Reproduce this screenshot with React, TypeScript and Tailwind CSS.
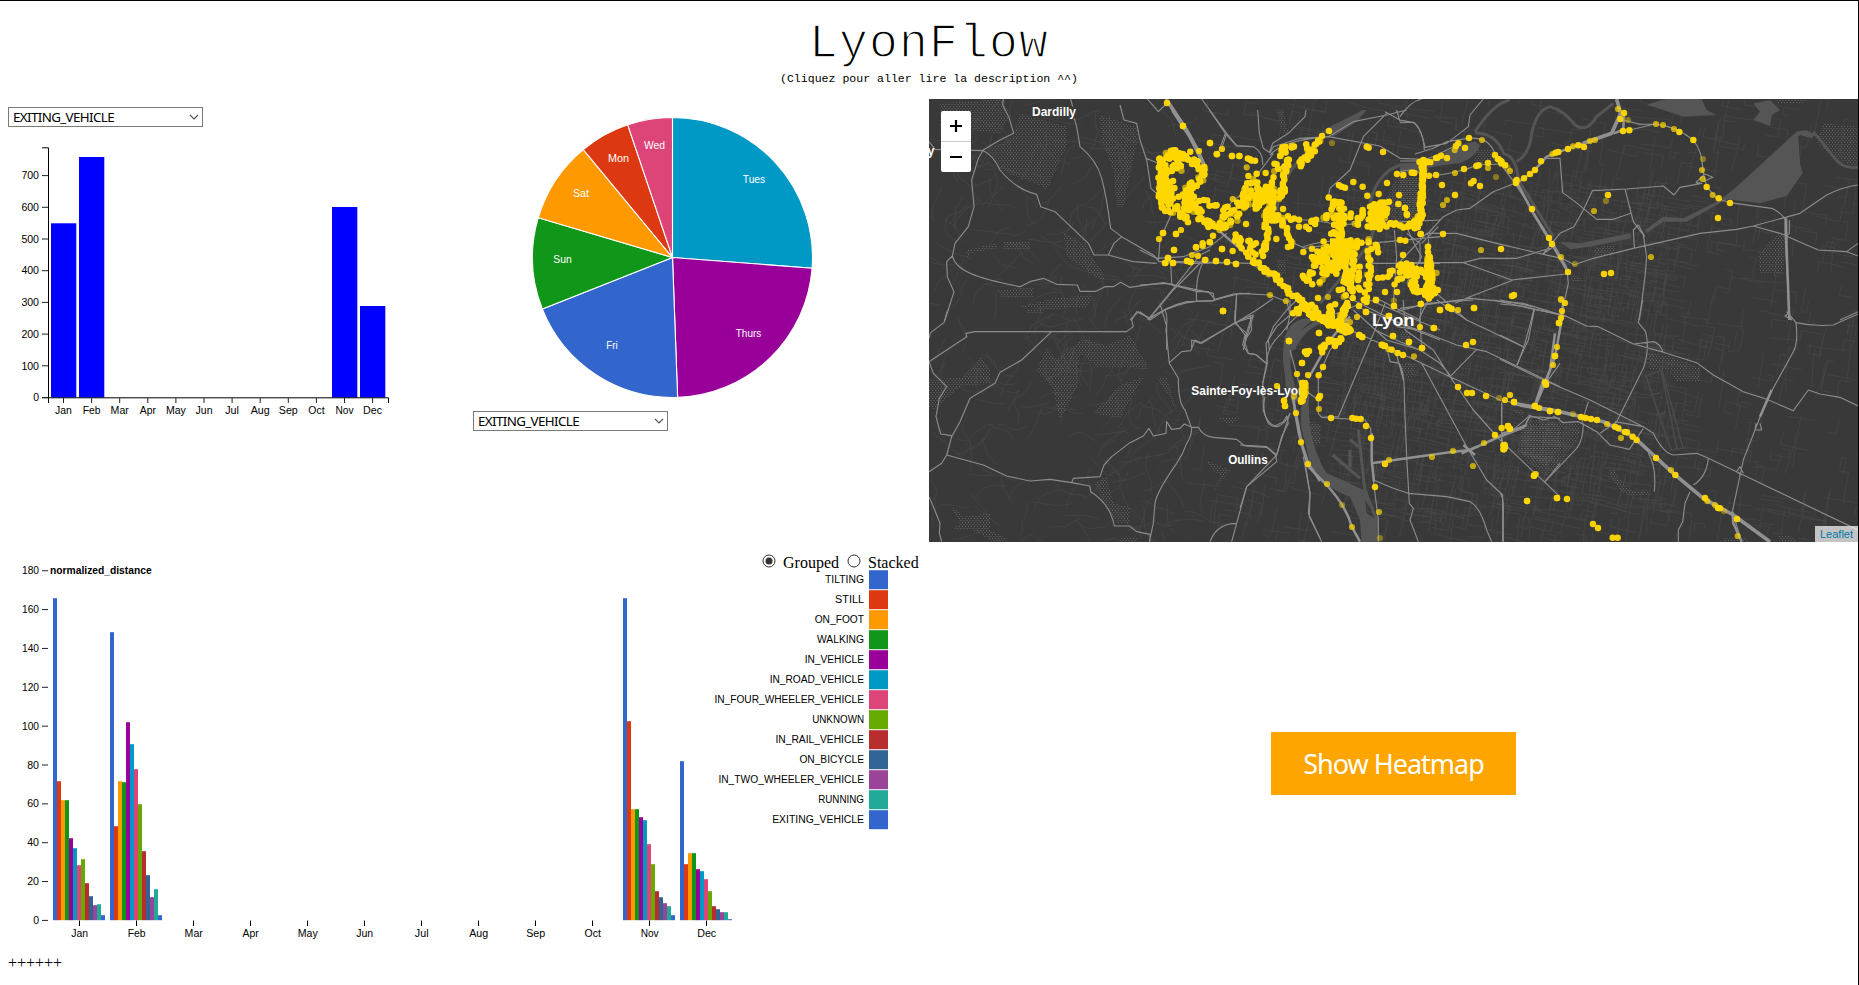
import React from "react";

const COLORS = ["#3366cc", "#dc3912", "#ff9900", "#109618", "#990099", "#0099c6", "#dd4477", "#66aa00", "#b82e2e", "#316395", "#994499", "#22aa99", "#3366cc"];
const ACTIVITIES = [
  { name: "TILTING", w: 39 }, { name: "STILL", w: 29 }, { name: "ON_FOOT", w: 49.3 }, { name: "WALKING", w: 47 },
  { name: "IN_VEHICLE", w: 59.3 }, { name: "IN_ROAD_VEHICLE", w: 94.3 }, { name: "IN_FOUR_WHEELER_VEHICLE", w: 149.6 },
  { name: "UNKNOWN", w: 51.8 }, { name: "IN_RAIL_VEHICLE", w: 88.6 }, { name: "ON_BICYCLE", w: 64.6 },
  { name: "IN_TWO_WHEELER_VEHICLE", w: 145.6 }, { name: "RUNNING", w: 45.8 }, { name: "EXITING_VEHICLE", w: 91.8 },
];
const MONTHS = ["Jan", "Feb", "Mar", "Apr", "May", "Jun", "Jul", "Aug", "Sep", "Oct", "Nov", "Dec"];
const MONTH_W = [16.8, 17.8, 18.2, 16.2, 20, 17, 13.7, 19, 19, 16.3, 18, 19];

function Select({ className = "" }: { className?: string }) {
  return (
    <div className={"flex h-5 w-[195px] items-center justify-between border border-[#7a7a7a] bg-white pl-1 pr-[3px] " + className}>
      <span className="font-['Noto_Sans',sans-serif] text-[13.33px] leading-[18px] tracking-[-0.6px] text-black">EXITING_VEHICLE</span>
      <svg width="10" height="6" viewBox="0 0 10 6" fill="none" stroke="#555" strokeWidth="1.2"><path d="M1 1 L5 5 L9 1" /></svg>
    </div>
  );
}

function Label({ x, y, w, children, anchor = "middle", fill = "#000", className }: { x: number; y: number; w: number; children: React.ReactNode; anchor?: "start" | "middle" | "end"; fill?: string; className?: string }) {
  return (
    <text x={x} y={y} textAnchor={anchor} textLength={w} lengthAdjust="spacingAndGlyphs" fill={fill} className={className}>
      {children}
    </text>
  );
}

function MonthlyBars() {
  const bars = [[51, 223.3], [79, 157], [332, 207], [360, 306]];
  return (
    <svg className="block font-['Liberation_Sans',Arial,sans-serif] text-[10px]" width="400" height="300" viewBox="0 127 400 300">
      {bars.map(([x, y]) => <rect key={x} x={x} y={y} width="25.3" height={397.5 - y} fill="#00f" />)}
      <path d="M42 147.8H48.5V397.8H42 M48.5 397V403 M48.5 397.8H388.5V403" fill="none" stroke="#000" />
      {[0, 1, 2, 3, 4, 5, 6, 7].map((v) => (
        <g key={v}>
          <path d={`M42 ${397.5 - v * 31.7}H48`} stroke="#222" />
          <Label x={39} y={401.2 - v * 31.7} anchor="end" w={v ? 17.6 : 5.8}>{v * 100}</Label>
        </g>
      ))}
      {MONTHS.map((m, i) => (
        <g key={m}>
          <path d={`M${63.5 + i * 28.1} 398V403`} stroke="#222" />
          <Label x={63.5 + i * 28.1} y={414.2} w={MONTH_W[i]}>{m}</Label>
        </g>
      ))}
    </svg>
  );
}

function Pie() {
  const cuts = [0, 94.4, 177.9, 248.4, 286.5, 320.4, 341.35, 360];
  const fills = ["#0099c6", "#990099", "#3366cc", "#109618", "#ff9900", "#dc3912", "#dd4477"];
  const labels: [string, number, number, number][] = [["Tues", 754, 183.3, 22.5], ["Thurs", 748.5, 337.3, 25.5], ["Fri", 612, 349.3, 11.5], ["Sun", 562.5, 263.3, 18.5], ["Sat", 581, 197.3, 16], ["Mon", 618.5, 162.3, 21], ["Wed", 654.5, 149.3, 21]];
  const at = (deg: number) => {
    const a = (deg * Math.PI) / 180;
    return `${672.5 + 140 * Math.sin(a)} ${257.5 - 140 * Math.cos(a)}`;
  };
  return (
    <svg className="block font-['Liberation_Sans',Arial,sans-serif] text-[10px]" width="400" height="304" viewBox="473 107 400 304">
      {fills.map((f, i) => <path key={i} d={`M672.5 257.5L${at(cuts[i])}A140 140 0 0 1 ${at(cuts[i + 1])}Z`} fill={f} stroke="#fff" strokeWidth="1.1" />)}
      {labels.map(([s, x, y, w]) => <Label key={s} x={x} y={y} w={w} fill="#fff">{s}</Label>)}
    </svg>
  );
}

const GROUPS: { x: number; h: number[] }[] = [
  { x: 53, h: [966, 417, 360, 360, 246, 216, 165, 183, 111, 72, 45, 48, 15] },
  { x: 110, h: [864, 282, 417, 414, 594, 528, 453, 348, 207, 135, 69, 93, 15] },
  { x: 623, h: [966, 597, 333, 333, 309, 300, 228, 168, 87, 69, 51, 42, 15] },
  { x: 680, h: [477, 168, 201, 201, 153, 147, 123, 87, 42, 33, 24, 24, 3] },
];

function GroupedBars() {
  return (
    <svg className="block font-['Liberation_Sans',Arial,sans-serif] text-[10px]" width="929" height="380" viewBox="0 570 929 380" overflow="visible">
      {[0, 1, 2, 3, 4, 5, 6, 7, 8, 9].map((i) => (
        <g key={i}>
          <path d={`M42 ${920.4 - i * 38.85}H48`} stroke="#222" />
          <Label x={39} y={924 - i * 38.85} anchor="end" w={i === 0 ? 5.8 : i < 5 ? 11.8 : 17}>{i * 20}</Label>
        </g>
      ))}
      <Label x={50} y={574.3} w={101.7} anchor="start" className="font-bold">normalized_distance</Label>
      {GROUPS.map((g) => g.h.map((h, i) => <rect key={g.x + "-" + i} x={g.x + i * 4} y={920.2 - h / 3} width="4" height={h / 3} fill={COLORS[i]} />))}
      {MONTHS.map((m, i) => (
        <g key={m}>
          <path d={`M${79.5 + i * 57} 920.5V926`} stroke="#000" />
          <Label x={79.7 + i * 57} y={936.5} w={MONTH_W[i]}>{m}</Label>
        </g>
      ))}
      {ACTIVITIES.map((a, i) => (
        <g key={a.name}>
          <rect x="869" y={570.2 + i * 20} width="19" height="19" fill={COLORS[i]} />
          <Label x={864} y={583.2 + i * 20} anchor="end" w={a.w}>{a.name}</Label>
        </g>
      ))}
    </svg>
  );
}

type Track = { p: number[]; s: number; d: number };
type Sheet = { x: number; y: number; roads: string; wide?: string; highway?: string; water?: string; thinWater?: string; woods?: string; blobs?: string; dots: number[]; dim?: number[]; tracks?: Track[] };
const t = (s: number, d: number, ...p: number[]): Track => ({ p, s, d });

// Every sheet is drawn at three units per pixel from its own origin.
const SHEETS: Sheet[] = [
  {
    x: 920, y: 90,
    roads: "M250 27L248 45L268 85L281 130L240 150L190 180L175 205L155 270L162 350L145 410L105 460L97 498L80 515L82 560L102 605L75 690 M97 498Q105 530 150 550T300 590L330 575L370 565L410 583L472 585L480 604L528 604L555 590L580 590L602 577L628 592L730 578L765 587L830 604L865 605L885 628L940 612L990 610 M27 155L45 178L190 182Q220 195 240 240Q290 300 350 313L362 350L405 365L505 460L522 495L565 495Q600 505 640 515L710 520 M565 495L582 460L605 440L572 415Q560 320 545 265T480 170L470 110L463 85 M452 27L458 50 M605 440L700 495L718 515 M600 45L612 90L650 100L660 150L680 210L693 295L715 315 M678 205L715 220 M682 27L715 65L735 45 M845 27L920 130L950 167L990 170 M920 130L905 175 M752 520L755 580L765 590 M683 690L765 590L840 495L870 480 M735 660Q800 630 880 632L940 612 M830 635Q825 560 850 515 M945 690L950 612 M630 690L655 665L690 685 M715 515L720 450L755 370 M718 515L820 520L940 518",
    highway: "M738 27L800 120L835 185L860 245",
    woods: "M60 40L250 27L270 80L240 130L150 120L60 110Z M300 70L440 110L440 170L380 300L350 280L260 250L200 180L280 140Z M540 75L650 110L650 160L610 350L590 350L580 240L545 150Z M140 480L230 460L230 475L150 490L140 510Z M250 455L330 455L330 478L250 478Z M430 430L500 470L560 570L540 570L440 500Z M230 600L340 590L340 625L240 620Z M300 650L400 625L520 615L500 650L380 660Z",
    dots: [741, 39, 789, 108, 870, 159, 891, 193, 936, 198, 958, 198, 729, 429, 768, 432, 762, 480, 744, 504, 736, 519, 759, 519, 802, 513, 812, 516, 855, 510, 888, 513, 921, 516, 948, 522, 909, 663, 828, 472, 848, 460, 870, 456, 906, 477],
    dim: [837, 183, 906, 177, 760, 180, 939, 327, 717, 447, 783, 420, 816, 495, 834, 497],
  },
  {
    x: 1140, y: 110,
    roads: "M208 0L256 70L290 108L340 110Q370 125 368 165 M256 70L230 140 M353 0L358 70L370 115L390 128L400 110L480 85L565 80L720 108L780 145L900 150 M388 128L398 100L445 70L495 20L498 0 M390 135Q430 90 565 80L640 35L740 15L800 0 M740 10L670 80L630 180L570 235L565 260 M735 5L780 30L820 38Q850 60 853 120 M780 35L770 0 M490 410Q580 380 690 400L900 380 M430 330L520 330L600 345L660 340 M440 390L495 415L560 405 M690 340L900 330 M763 360L770 440L760 580 M800 350Q820 400 845 440L800 520 M845 400L895 350 M690 460L900 460 M865 375L870 560L840 620L845 720 M240 330Q250 290 310 250L400 130 M0 420L50 445L130 440L210 410L260 370 M55 455L140 455L330 460L400 500L470 570L440 600L400 650L385 690L388 720 M25 630L100 540L190 450 M0 525L80 520L220 550L222 570L300 550L390 555L440 575 M30 625Q80 590 140 575L220 573 M290 550L285 640L320 670L310 720 M285 640L350 600L400 565 M285 640L180 700L155 690L155 720 M60 580L80 650V720 M330 615L335 660L315 690 M565 620L690 570L900 660 M620 560L800 650L900 690 M640 600L740 690L840 720 M700 560L840 630 M440 570L450 615L440 660 M0 605L25 625",
    highway: "M98 0L150 80L190 160",
    wide: "M240 365L340 450L400 500",
    thinWater: "M410 320Q410 230 470 160L560 60L660 10 M690 280Q710 190 780 165L900 160 M540 580L690 400L720 280",
    water: "M440 720Q450 670 550 620L545 640Q490 660 465 720Z M560 60L640 20L665 0L680 0L650 35L580 80Z",
    woods: "M770 200L840 200L840 330L770 340L730 280Z M410 5L430 0L445 70L430 70Z M410 450L438 445L438 490L415 500Z M780 665L810 665L810 690L780 690Z",
    blobs: "M53 178L70 175L105 235L100 290L80 285L53 268Z M570 385L640 385L625 470L645 500L640 540L600 520L610 480L580 460L570 420Z M345 240L395 232L390 275L350 295L335 290Z M685 350L695 290L735 275L742 300L715 355L690 362Z",
    dots: [129, 48, 210, 99, 230, 132, 276, 138, 298, 138, 102, 420, 84, 444, 75, 459, 99, 459, 141, 453, 152, 456, 196, 450, 228, 453, 261, 456, 288, 462, 69, 369, 108, 372, 249, 603, 447, 693, 567, 63, 546, 78, 729, 126, 680, 110, 686, 113, 377, 189, 429, 297, 477, 350, 498, 350, 409, 387, 444, 411, 490, 426, 516, 416, 640, 216, 668, 230, 682, 257, 668, 300, 716, 252, 741, 219, 777, 255, 775, 282, 795, 294, 801, 315, 771, 192, 790, 195, 820, 188, 845, 170, 862, 155, 780, 390, 796, 392, 789, 435, 842, 372, 864, 411, 714, 504, 735, 546, 771, 546, 708, 570, 678, 606, 746, 618, 762, 588, 842, 582, 881, 654, 759, 678, 807, 696, 846, 714, 657, 675, 667, 681, 537, 669, 534, 564, 318, 342, 325, 198, 168, 412, 188, 407, 209, 397, 246, 417, 278, 423, 219, 377, 735, 707, 727, 705],
    dim: [99, 120, 177, 123, 246, 117, 576, 99, 320, 172, 57, 387, 123, 360, 174, 438, 156, 435, 390, 555, 438, 573, 468, 606, 564, 561, 762, 572, 651, 621, 630, 636, 840, 651, 711, 410, 540, 522, 278, 267, 238, 360, 455, 107, 735, 325, 458, 398],
    tracks: [
      t(7, 14, 65, 140, 90, 130, 142, 130, 125, 165, 105, 180, 75, 170), t(6, 14, 85, 145, 120, 145), t(7, 9, 62, 150, 62, 260, 78, 300), t(9, 12, 75, 180, 100, 230), t(6, 14, 145, 150, 185, 175, 190, 200, 155, 230, 120, 255), t(5, 18, 70, 250, 105, 300, 140, 325, 150, 240),
      t(6, 13, 150, 265, 165, 300, 200, 340, 250, 350, 295, 320), t(9, 10, 180, 275, 235, 285), t(6, 18, 240, 355, 270, 300, 320, 270, 325, 225, 350, 205), t(5, 18, 310, 290, 345, 250, 395, 240, 350, 285, 395, 310), t(7, 8, 395, 205, 395, 310), t(6, 8, 380, 300, 380, 400, 365, 435),
      t(8, 10, 390, 330, 430, 340, 448, 400), t(11, 8, 415, 322, 475, 325), t(7, 18, 297, 370, 300, 400, 340, 405, 325, 440), t(8, 9, 340, 445, 380, 490, 405, 500, 440, 540, 490, 580), t(5, 14, 475, 600, 490, 580, 540, 625, 580, 640, 632, 660), t(7, 13, 400, 170, 430, 182, 440, 145, 420, 130, 455, 110), t(6, 11, 480, 165, 510, 130, 540, 95), t(8, 8, 495, 105, 510, 125), t(9, 5, 438, 165, 432, 200, 420, 265, 434, 235), t(9, 5, 322, 145, 345, 155),
      t(9, 12, 498, 348, 550, 325, 635, 315), t(7, 12, 575, 260, 573, 290, 606, 280, 600, 380, 575, 360, 600, 315), t(6, 22, 560, 395, 580, 490, 620, 400, 650, 390, 650, 500, 640, 550, 600, 540), t(8, 15, 500, 500, 525, 450, 550, 415, 545, 480), t(9, 8, 488, 497, 520, 520), t(7, 9, 545, 510, 575, 470, 555, 430), t(9, 8, 688, 385, 688, 500, 675, 575), t(12, 9, 712, 400, 710, 430), t(8, 11, 668, 300, 648, 350), t(5, 13, 690, 355, 700, 290, 738, 285, 715, 350), t(8, 10, 690, 345, 760, 345, 830, 350),
      t(7, 6, 830, 350, 845, 310, 845, 250, 850, 160), t(10, 5, 600, 222, 615, 232), t(7, 16, 740, 500, 790, 465, 830, 480, 850, 495), t(8, 9, 790, 485, 820, 500, 835, 540, 885, 550), t(8, 10, 865, 430, 870, 490, 865, 565), t(8, 11, 765, 520, 790, 495), t(6, 11, 570, 640, 578, 590), t(7, 8, 602, 640, 612, 595, 625, 580), t(8, 7, 585, 705, 600, 690, 570, 690, 545, 715), t(8, 9, 620, 650, 630, 665),
    ],
  },
  {
    x: 1400, y: 90,
    roads: "M0 80Q30 35 65 27 M0 97H40Q60 105 75 172L140 160L205 110L210 75L250 27 M45 192L100 175L140 155L205 145Q260 140 280 180L300 220L345 280L460 460L500 530L505 580L480 690 M0 213H60L100 200L160 170 M0 245Q50 230 70 260Q180 250 230 225L310 222 M440 205H480L488 308L525 335L590 388H640L693 370 M577 302L550 360L522 410L480 430L428 493L460 470 M577 302L680 297L790 288L822 315L840 292L905 280L888 278L915 252L938 262L910 275 M675 297L700 395L730 435L740 500L735 560L718 690 M703 475L700 420L715 405L735 440 M0 515L80 430H170L290 460L430 493L485 505L525 525 M80 435L130 380L170 360L210 355L280 305L345 280 M520 525L580 505L700 475L900 430L1010 418L1060 408L1200 370L1280 315Q1330 290 1374 285 M1060 408L1140 430L1220 465L1255 480L1340 485L1374 460 M1340 485L1374 498 M0 518H190L240 505H350L450 475 M190 518L335 570L500 552 M340 570L210 620L165 640 M0 655L210 625L370 640L500 680 M110 610L200 690 M403 655L395 690 M20 430L60 460V520L0 520 M1155 385V430L1168 690 M1168 390V430L1155 440 M1160 665L1175 690 M1320 690L1374 665 M990 338L1115 355Q1150 370 1160 400 M690 120L765 102Q830 110 880 150Q910 190 908 240L920 290L950 325L990 338 M670 90L720 103L765 102",
    wide: "M650 27L662 70L635 130L520 170L440 200L400 245L350 280 M640 130L670 120L672 70 M355 285L400 370L460 470L500 540 M1158 385L1160 480L1168 690",
    highway: "M650 27L662 70L635 130L550 160",
    thinWater: "M225 125Q280 40 330 30M350 215Q390 190 395 130Q410 60 450 50Q490 60 525 105Q560 130 590 80L640 40 M225 128Q290 130 310 190Q350 200 355 270L460 440 M1240 125Q1270 160 1300 200Q1330 240 1374 232",
    water: "M0 230Q60 215 100 210Q170 160 225 155L240 165Q230 200 180 220Q100 225 60 245Q20 245 0 255Z M480 455L540 460L690 430L695 445L570 470L510 478Z M735 420L790 380L850 385L960 330L1010 290L1190 125L1220 120L1245 135L1235 145L1200 135L1010 315L950 345L860 395L790 395L740 430Z M975 325L1195 140L1200 220L1208 250L1160 318L1080 340L1000 330Z M740 45Q780 30 800 27H905L920 60L950 75L850 80L790 60L760 50Z M1060 40L1110 30L1140 60L1115 75L1110 108L1060 90L1080 65Z",
    woods: "M0 265L60 265L50 390L20 390L0 320Z M230 180L280 180L290 220L220 225Z M1270 100L1374 110V232L1320 210L1270 180L1250 155Z M1130 27H1230L1200 42H1130Z M585 475L650 460L640 495H585Z M510 545L560 575H515Z M1130 435L1155 430L1150 550H1080L1075 490Z",
    dots: [207, 144, 195, 174, 168, 168, 175, 160, 141, 204, 123, 197, 112, 203, 126, 285, 165, 315, 240, 288, 213, 280, 221, 273, 264, 219, 229, 228, 236, 226, 285, 195, 348, 274, 350, 270, 348, 279, 372, 265, 390, 252, 405, 240, 423, 214, 475, 186, 467, 188, 504, 177, 535, 166, 552, 171, 672, 69, 661, 87, 669, 123, 688, 121, 838, 126, 880, 150, 920, 291, 956, 325, 990, 339, 954, 384, 624, 315, 396, 357, 447, 444, 456, 462, 504, 546, 612, 552, 633, 549, 303, 477, 129, 432, 62, 432, 84, 470, 342, 615, 336, 618, 222, 654, 147, 653, 154, 656, 120, 660, 15, 354, 20, 372, 87, 257, 108, 255, 35, 248, 43, 249, 108, 204, 192, 237, 305, 215],
    dim: [246, 150, 164, 180, 165, 249, 288, 261, 264, 234, 141, 330, 129, 345, 297, 207, 324, 235, 330, 243, 768, 102, 789, 105, 822, 117, 909, 207, 906, 240, 908, 267, 938, 315, 654, 57, 684, 90, 570, 153, 585, 150, 519, 169, 457, 192, 618, 333, 582, 363, 753, 501, 243, 480, 483, 501, 525, 522, 483, 627, 495, 639, 486, 663, 483, 684, 174, 660, 63, 642, 9, 255],
    tracks: [t(8, 7, 75, 215, 70, 250, 63, 340, 65, 370, 40, 405, 60, 385), t(9, 5, 60, 213, 90, 214), t(7, 12, 0, 530, 40, 540, 75, 560, 100, 555, 85, 620, 105, 605), t(9, 7, 85, 500, 90, 580, 80, 600), t(8, 12, 30, 570, 50, 600), t(9, 5, 293, 205, 312, 225)],
  },
  {
    x: 920, y: 310,
    roads: "M83 0L72 38L32 68L27 85 M27 155L140 80L138 70L165 65H620L640 50L635 30L650 5L680 20L690 30L735 0 M395 65L305 150L240 187L225 220L150 265L120 335L95 380L80 435L65 460L27 485 M27 155L40 190L80 230L58 265L48 320L62 372L95 377 M80 435L190 465L260 498L330 513L390 508L455 518L510 528L512 545Q570 580 583 648H628L650 665L690 673V695 M455 518L460 505L540 500L552 465L575 440L630 398L670 378L687 355L700 378L738 370L740 335L755 358L780 355L793 342L815 352H835Q850 380 880 382L950 388L975 408L1040 412L1068 437L1070 455L980 530L950 640L935 695 M735 0Q745 20 738 60L748 160L775 205Q775 280 795 300L815 355Q815 380 800 400Q790 430 770 460Q710 545 705 580L700 640L688 695 M748 158L785 125L812 122L825 90L845 100L945 38L1000 20 M945 0V35L975 75L968 105L985 130L1005 133L1040 160 M995 20L975 85 M1150 0L1108 40L1085 70Q1040 110 1040 160L1028 220L1030 300Q1040 340 1065 348L1090 335L1100 318L1105 340L1085 380L1070 435 M870 695Q890 640 950 640 M27 560L40 590L60 640L58 670L65 695 M1155 455L1170 550L1168 620L1200 685",
    water: "M1160 25Q1080 80 1090 160Q1100 250 1120 280L1140 270Q1100 170 1115 110Q1130 60 1180 30Z M1145 290H1165Q1160 380 1200 450V490Q1130 380 1145 290Z",
    wide: "M1118 265L1130 320L1145 400L1165 460L1200 513",
    woods: "M490 85L560 105L630 75L690 180L600 170L530 170L480 130L470 230L420 335L400 240L350 180L380 110L410 150Z M710 200H740L770 300L740 250Z M670 200L600 325L520 310L600 225Z M180 140L210 180V220L120 230L40 300L27 290V210L130 200Z M560 500L580 580L630 590V640L590 640L520 520Z M85 575L130 620L210 610L210 660L270 690L220 695L160 660H95L120 640Z M855 450L930 480L880 545L900 500Z M890 320L960 325L930 345Z M600 680H650V695H600Z M1170 340H1200V400H1180Z M320 0H370V10H320Z",
    dots: [909, 3, 1107, 93, 1146, 159, 1092, 272, 1095, 288, 1155, 125, 1165, 124, 1160, 130],
    dim: [1071, 228, 1131, 192, 1164, 195, 1122, 258, 1128, 309, 1143, 397, 1164, 462],
  },
  {
    x: 1240, y: 300,
    roads: "M150 0L150 45L110 80L78 130L82 190L68 250 M405 90L295 350L245 352L235 340V230L270 150L330 80 M235 300L180 260L150 150 M545 190L680 440L740 540L788 585V725 M630 230L700 330L780 420L960 590 M710 148L630 230 M330 90L420 130L545 190L630 230L780 300L880 320 M440 140L450 185L478 190Q495 220 493 300L500 470L508 610L520 625L510 660L535 725 M420 130L470 165L490 240 M350 20L560 100L650 135L740 155L960 260 M490 0L495 90L580 150L630 230 M545 0L537 90L470 80 M590 0L680 60L850 140 M435 10L405 90L480 125L540 150L600 190L630 225 M470 35L560 10L700 0 M760 0L960 45 M882 28L855 130L832 195 M960 190L910 260L885 320 M785 380V310 M790 440L785 410L850 385L870 350L960 355 M915 545L960 490 M245 352L375 360L392 385L400 540L415 660V725 M400 540L460 565L505 580L620 590L690 605Q720 620 740 690L755 725 M190 470L210 580L205 640L245 725 M0 435L80 440L110 465L20 560L0 625 M110 465L130 400L150 340Q120 400 85 370Q65 330 75 290 M0 60L40 45L15 130L25 160L50 165L78 190 M750 425L790 400L850 380",
    wide: "M205 235L270 120L330 50 M160 290Q170 400 205 500L260 555Q320 620 335 680L360 725 M395 490L500 475L640 455L690 450L800 400L860 375 M945 100L930 210L885 320 M395 400V480L402 545 M670 435L705 465 M665 460L710 440",
    highway: "M820 310L885 322L960 335",
    thinWater: "M355 390L370 530L375 570 M278 465L360 535 M330 450V500 M330 418L355 440 M375 570L410 660L405 725 M340 595L375 660L370 725",
    water: "M205 55Q130 60 130 150L137 260H155Q135 120 205 70Z M183 280H207Q200 430 260 520Q310 540 380 575L395 630L375 600L380 640L410 660L415 725H365L360 660L330 590Q240 560 210 490Q185 400 183 280Z",
    woods: "M850 380L940 370L960 380V440L920 500L840 460Z M485 190L530 190L535 225L510 235L485 215Z M480 95H510L515 130H485Z M205 360L245 375L240 420L210 430Z M810 325L850 330L850 355Z",
    blobs: "M178 240H202V290L185 312L178 290Z",
    dots: [147, 123, 186, 189, 249, 201, 236, 226, 237, 99, 267, 120, 297, 126, 285, 138, 195, 155, 207, 153, 200, 162, 246, 146, 132, 302, 135, 318, 273, 354, 337, 354, 348, 356, 362, 357, 378, 378, 393, 414, 435, 492, 405, 561, 459, 108, 507, 126, 546, 144, 678, 135, 699, 126, 582, 84, 702, 24, 600, 30, 624, 21, 635, 27, 447, 48, 378, 36, 357, 18, 372, 0, 408, 0, 462, 18, 358, 105, 366, 111, 425, 134, 432, 138, 455, 149, 473, 159, 489, 165, 240, 288, 236, 295, 654, 261, 681, 279, 696, 279, 738, 288, 822, 306, 785, 384, 804, 379, 809, 386, 765, 405, 794, 435, 795, 442, 792, 448, 882, 527, 861, 603, 951, 594, 885, 318, 930, 333, 954, 336, 945, 168, 957, 69, 918, 252, 183, 305],
    dim: [111, 258, 171, 222, 204, 225, 162, 290, 168, 339, 183, 426, 204, 492, 261, 552, 306, 615, 336, 681, 237, 327, 447, 480, 417, 636, 420, 714, 576, 471, 639, 453, 732, 429, 699, 498, 777, 294, 795, 300, 810, 285, 897, 324, 951, 141, 939, 195, 522, 169, 540, 81, 543, 12, 654, 30, 351, 51, 885, 522, 445, 147],
    tracks: [t(5, 9, 190, 245, 195, 260, 185, 300), t(6, 10, 190, 10, 215, 45, 260, 60, 330, 95), t(7, 10, 165, 40, 195, 20), t(7, 8, 270, 60, 275, 20), t(8, 7, 300, 60, 312, 35, 325, 10), t(9, 5, 245, 140, 247, 155)],
  },
  {
    x: 1500, y: 300,
    roads: "M0 12L65 18L105 28L190 45L260 78L295 80L400 132L485 155L590 188L640 225L730 275L800 298L880 332L925 270L960 282L1020 292L1074 318 M0 0L100 20 M103 28L85 120L50 195 M0 105L70 140 M0 178L130 240L270 300L430 380L460 400Q490 460 520 465L590 460L625 475L730 525L1074 690 M400 132L460 125Q480 130 490 158 M428 0L415 68L437 95Q450 150 430 205L350 365L300 400 M625 475Q620 530 580 555 M570 575L555 610L548 665L535 690V725 M865 0V40L888 68Q940 80 1000 75L1074 42 M868 38L855 48L875 60 M888 68Q895 130 880 155L800 300L730 480L697 635L725 725 M768 370L765 390H785L780 370 M725 525L710 515L720 500L730 520 M135 545L230 445Q250 420 250 370 M265 305L245 370L290 395L330 435L388 448L430 385 M85 345L130 360L165 350L190 368L235 365L290 395 M345 365L430 380 M445 460Q470 500 463 575 M0 410L75 375L90 345 M0 580Q10 590 10 620V725 M85 350L45 385L5 400 M5 305V425",
    highway: "M60 315L180 335L310 365L400 410L520 520L610 595L700 645L810 725",
    wide: "M190 0L185 60L165 170L135 250L105 318 M130 240L105 315 M697 635L700 670L725 725 M815 270L780 350",
    woods: "M60 390L90 355L240 370L235 420L190 480L140 530L50 460Z M445 160L500 165L600 205V245H530L510 210H445Z M325 510H345Q365 560 400 575L440 570L450 585H380Q340 560 325 510Z M830 705H870L890 725H845Z M670 715H740V725H670Z",
    dots: [177, 69, 165, 168, 138, 254, 135, 247, 104, 318, 42, 306, 150, 333, 174, 336, 243, 351, 257, 354, 273, 357, 291, 360, 345, 380, 355, 385, 375, 396, 381, 397, 398, 410, 410, 420, 468, 474, 526, 525, 615, 594, 654, 624, 660, 625, 711, 657, 102, 527, 81, 603, 171, 594, 201, 597, 279, 672, 294, 684, 338, 713, 353, 713, 24, 378, 30, 386, 10, 436, 14, 441, 10, 448],
    dim: [195, 9, 186, 33, 183, 53, 171, 141, 159, 195, 30, 285, 15, 300, 117, 324, 219, 342, 321, 372, 363, 414, 513, 510, 645, 615, 672, 633, 713, 708, 108, 522, 622, 603, 183, 0],
  },
];

function seeded(seed: number) {
  let s = seed;
  return () => {
    s = (s * 1664525 + 1013904223) % 4294967296;
    return s / 4294967296;
  };
}

const STREETS = (() => {
  const rnd = seeded(11);
  let d = "";
  for (let i = 0; i < 2100; i++) {
    const cityward = rnd() < 0.5;
    let x = cityward ? 1340 + rnd() * 330 : 929 + rnd() * 929;
    let y = cityward ? 190 + rnd() * 330 : 99 + rnd() * 443;
    let a = x > 1200 ? 0.18 + Math.floor(rnd() * 4) * 1.571 : rnd() * 6.28;
    d += `M${x.toFixed(1)} ${y.toFixed(1)}`;
    for (let k = 0; k < 4; k++) {
      const l = 4 + rnd() * 10;
      x += Math.cos(a) * l;
      y += Math.sin(a) * l;
      d += `L${x.toFixed(1)} ${y.toFixed(1)}`;
      a += x > 1200 ? (rnd() < 0.3 ? 1.571 : (rnd() - 0.5) * 0.2) : (rnd() - 0.5) * 1.3;
    }
  }
  return d;
})();

function scatter(track: Track, rnd: () => number) {
  const out: number[][] = [];
  const { p, s, d } = track;
  for (let i = 0; i + 3 < p.length; i += 2) {
    const dx = p[i + 2] - p[i];
    const dy = p[i + 3] - p[i + 1];
    const n = Math.max(1, Math.round(Math.hypot(dx, dy) / s));
    for (let k = 0; k <= n; k++) {
      out.push([p[i] + (dx * k) / n + (rnd() - 0.5) * d * 1.6, p[i + 1] + (dy * k) / n + (rnd() - 0.5) * d * 1.6, rnd()]);
    }
  }
  return out;
}

function pairs(a: number[]) {
  const out: number[][] = [];
  for (let i = 0; i < a.length; i += 2) out.push([a[i], a[i + 1]]);
  return out;
}

function CityMap() {
  const place = (s: Sheet) => `translate(${s.x} ${s.y}) scale(0.33333)`;
  const rnd = seeded(5);
  return (
    <svg className="block font-['Liberation_Sans',Arial,sans-serif]" width="929" height="443" viewBox="929 99 929 443">
      <defs>
        <pattern id="wood" width="9" height="12" patternUnits="userSpaceOnUse">
          <rect width="3" height="3" fill="#646464" />
          <rect x="4.5" y="6" width="3" height="3" fill="#646464" />
        </pattern>
      </defs>
      <rect x="929" y="99" width="929" height="443" fill="#393939" />
      <path d={STREETS} fill="none" stroke="#4a4a4a" strokeWidth="0.8" opacity="0.7" />
      {SHEETS.map((s, i) => (
        <g key={i} transform={place(s)} fill="none" strokeLinejoin="round">
          <path d={s.woods} fill="url(#wood)" />
          <path d={s.water} fill="#555" />
          <path d={s.thinWater} stroke="#555" strokeWidth="9" />
        </g>
      ))}
      {SHEETS.map((s, i) => (
        <g key={i} transform={place(s)} fill="none" stroke="#8c8c8c" strokeLinejoin="round">
          <path d={s.roads} strokeWidth="3.4" />
          <path d={s.wide} strokeWidth="7.5" stroke="#919191" />
          <path d={s.highway} strokeWidth="11" stroke="#919191" />
        </g>
      ))}
      <path d="M1646 376L1662 370L1683 448L1671 450Z M1650 395L1660 393 M1656 415L1666 412 M1661 370L1677 449" fill="none" stroke="#4a4a4a" strokeWidth="1.6" />
      <g fill="#fff" fontWeight="700" fontSize="12.5">
        <text x="1032" y="116" textLength="44" lengthAdjust="spacingAndGlyphs">Dardilly</text>
        <text x="927.5" y="155">y</text>
        <text x="1191.3" y="394.5" textLength="114" lengthAdjust="spacingAndGlyphs">Sainte-Foy-lès-Lyon</text>
        <text x="1228.2" y="464" textLength="39.5" lengthAdjust="spacingAndGlyphs">Oullins</text>
      </g>
      {SHEETS.map((s, i) => (
        <g key={i} transform={place(s)} fill="#ffd700">
          <path d={s.blobs} />
          {pairs(s.dim ?? []).map(([x, y], k) => <circle key={k} cx={x} cy={y} r="9.3" opacity={k % 5 === 3 ? 0.4 : 0.7} />)}
          {(s.tracks ?? []).flatMap((tr) => scatter(tr, rnd)).map(([x, y, o], k) => <circle key={k} cx={x} cy={y} r="9.7" opacity={o < 0.12 ? 0.65 : 1} />)}
          {pairs(s.dots).map(([x, y], k) => <circle key={k} cx={x} cy={y} r="9.7" opacity="0.96" />)}
        </g>
      ))}
      <text x="1372" y="326.3" fill="#fff" fontWeight="700" fontSize="17.3" textLength="42.5" lengthAdjust="spacingAndGlyphs">Lyon</text>
    </svg>
  );
}

function Radio({ checked = false }: { checked?: boolean }) {
  return (
    <svg width="14" height="14" viewBox="0 0 14 14" className="shrink-0">
      <circle cx="7" cy="7" r="6" fill="#fff" stroke="#333" />
      {checked && <circle cx="7" cy="7" r="3.5" fill="#333" />}
    </svg>
  );
}

export default function App() {
  return (
    <div className="flex h-[985px] w-[1859px] flex-col overflow-hidden border-r border-t border-black bg-white text-black">
      <header className="flex h-[98px] flex-col items-center pt-[17px] font-['Liberation_Mono','Courier_New',monospace]">
        <h1 className="text-[48px] leading-[53px] tracking-[1.2px] [-webkit-text-stroke:1.4px_white]">LyonFlow</h1>
        <p className="whitespace-pre text-[11.55px] leading-[16px]">(Cliquez pour aller lire la description ^^)</p>
      </header>
      <main className="grid grid-cols-[929px_929px] grid-rows-[443px_443px]">
        <section className="flex gap-[65px] pl-2 pt-2">
          <div className="w-[400px]">
            <Select />
            <div className="-ml-2"><MonthlyBars /></div>
          </div>
          <div className="w-[400px]">
            <Pie />
            <Select />
          </div>
        </section>
        <section className="relative overflow-hidden">
          <CityMap />
          <div className="absolute left-3 top-3 flex w-[30px] flex-col overflow-hidden rounded-[2px] bg-white">
            <button className="flex h-[31px] items-center justify-center border-b border-[#ccc]">
              <svg width="14" height="14" viewBox="0 0 14 14"><path d="M1 7H13M7 1V13" stroke="#000" strokeWidth="2.2" /></svg>
            </button>
            <button className="flex h-[30px] items-center justify-center">
              <svg width="14" height="14" viewBox="0 0 14 14"><path d="M1 7H13" stroke="#000" strokeWidth="2.2" /></svg>
            </button>
          </div>
          <div className="absolute bottom-0 right-0 flex h-4 w-[43px] items-center justify-center bg-white/70 font-['Liberation_Sans',Arial,sans-serif] text-[11px] text-[#0078a8]">Leaflet</div>
        </section>
        <section className="flex flex-col">
          <div className="flex h-7 items-end justify-end pr-[11px] font-['Liberation_Serif','Times_New_Roman',serif] text-[16px] leading-[18px]">
            <label className="flex items-center gap-[7px]"><Radio checked /><span className="relative top-0.5 w-[55px]">Grouped</span></label>
            <label className="ml-[9px] flex items-center gap-[7px]"><Radio /><span className="relative top-0.5 w-[50px]">Stacked</span></label>
          </div>
          <GroupedBars />
          <div className="pl-2 pt-1 font-['Liberation_Serif','Times_New_Roman',serif] text-[16px] leading-[18px]">++++++</div>
        </section>
        <section className="flex items-start justify-center pt-[190px]">
          <button className="h-[63px] w-[245px] bg-[#ffa500] pt-0.5 font-['Noto_Sans',sans-serif] text-[27px] tracking-[-1px] text-white">Show Heatmap</button>
        </section>
      </main>
    </div>
  );
}
